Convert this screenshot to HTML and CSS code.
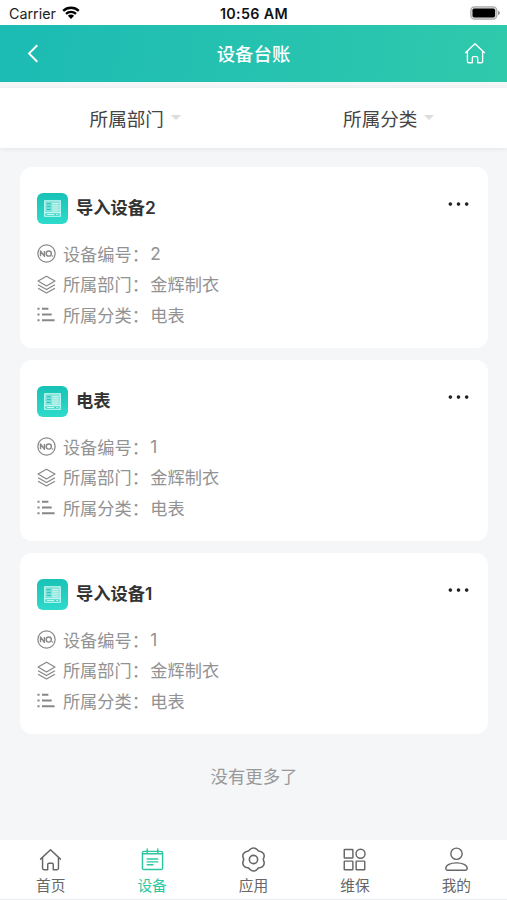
FILE: index.html
```html
<!DOCTYPE html>
<html lang="zh-CN">
<head>
<meta charset="UTF-8">
<title>设备台账</title>
<link rel="stylesheet" href="styles.css">
</head>
<body>
<svg class="defs" width="0" height="0">
  <symbol id="home" viewBox="0 0 24 24"><path d="M1.600 11.600 12 1.800l10.400 9.800M3.700 9.800v11.400q0 1.500 1.500 1.500h3.900v-5.400q0-1.300 1.300-1.300h3.200q1.300 0 1.300 1.300v5.400h3.900q1.500 0 1.500-1.500V9.800"/></symbol>
  <symbol id="no" viewBox="0 0 20 20"><circle cx="10" cy="10" r="9.100"/><path stroke-width="1.500" d="M3.700 13V7.300L7.800 13V7.300"/><circle cx="12.400" cy="10.100" r="2.700" stroke-width="1.500"/><path stroke-width="1.500" d="M16.300 12v1.300"/></symbol>
  <symbol id="layers" viewBox="0 0 20 20"><path d="m10 1.300 8.900 5-8.900 5.200-8.900-5.200zM1.100 10.200l8.900 5.100 8.900-5.100M1.100 13.900l8.900 5.100 8.900-5.100"/></symbol>
  <symbol id="list" viewBox="0 0 20 20"><path stroke-width="2" d="M.5 4h2.200M5.200 4H12M.5 10h2.200M5.200 10h10.300M.5 16h2.200M5.200 16h13.300"/></symbol>
  <symbol id="machine" viewBox="0 0 18 18"><path fill="#fff" fill-opacity=".4" d="M1 1h16v13H1z"/><path fill="none" stroke="#d8fbf5" stroke-width="1.200" d="M.8.8h16.400v16.400H.8zM.8 13.500h16.400"/><path stroke="#16c5b5" stroke-width="1" d="M3 4h4M3 7h4M3 10h4"/><path stroke="#d8fbf5" stroke-width="1" d="M8.500 3.500h7M8.500 5.500h7M8.500 7.500h7M8.500 9.500h7M8.500 11.500h7M3 15.400h8M13 15.400h2"/></symbol>
  <symbol id="dots" viewBox="0 0 20 4"><circle cx="2.200" cy="2" r="1.750"/><circle cx="10" cy="2" r="1.750"/><circle cx="17.800" cy="2" r="1.750"/></symbol>
</svg>

<div class="status">
  <div class="carrier">Carrier
    <svg class="wifi" viewBox="0 0 18 13"><path d="M1.200 4.900a11.200 11.200 0 0 1 15.600 0M4 7.800a7.200 7.200 0 0 1 10 0" fill="none" stroke="#000" stroke-width="2.300"/><path d="M5.900 9.800a4.400 4.400 0 0 1 6.200 0L9 13z"/></svg>
  </div>
  <div class="time">10:56 AM</div>
  <svg class="battery" viewBox="0 0 30 14"><rect x=".8" y=".8" width="26" height="12.400" rx="3.600" fill="#ddd" stroke="#aaa" stroke-width="1.200"/><rect x="2.500" y="2.500" width="22.600" height="9" rx="1.800"/><path d="M28 4.800q2 .6 2 2.200t-2 2.200z" fill="#999"/></svg>
</div>

<header class="header">
  <svg class="back" viewBox="0 0 12 20"><path d="M10.500 1.300 1.800 10l8.700 8.700"/></svg>
  <h1>设备台账</h1>
  <svg class="home"><use href="#home"/></svg>
</header>

<div class="filters">
  <div class="filter">所属部门<i></i></div>
  <div class="filter">所属分类<i></i></div>
</div>

<main class="list">
  <section class="card">
    <div class="card-head"><span class="badge"><svg><use href="#machine"/></svg></span><h2>导入设备2</h2><svg class="more"><use href="#dots"/></svg></div>
    <div class="row"><svg><use href="#no"/></svg><span>设备编号：</span><b>2</b></div>
    <div class="row"><svg><use href="#layers"/></svg><span>所属部门：</span><b>金辉制衣</b></div>
    <div class="row"><svg><use href="#list"/></svg><span>所属分类：</span><b>电表</b></div>
  </section>
  <section class="card">
    <div class="card-head"><span class="badge"><svg><use href="#machine"/></svg></span><h2>电表</h2><svg class="more"><use href="#dots"/></svg></div>
    <div class="row"><svg><use href="#no"/></svg><span>设备编号：</span><b>1</b></div>
    <div class="row"><svg><use href="#layers"/></svg><span>所属部门：</span><b>金辉制衣</b></div>
    <div class="row"><svg><use href="#list"/></svg><span>所属分类：</span><b>电表</b></div>
  </section>
  <section class="card">
    <div class="card-head"><span class="badge"><svg><use href="#machine"/></svg></span><h2>导入设备1</h2><svg class="more"><use href="#dots"/></svg></div>
    <div class="row"><svg><use href="#no"/></svg><span>设备编号：</span><b>1</b></div>
    <div class="row"><svg><use href="#layers"/></svg><span>所属部门：</span><b>金辉制衣</b></div>
    <div class="row"><svg><use href="#list"/></svg><span>所属分类：</span><b>电表</b></div>
  </section>
  <p class="end">没有更多了</p>
</main>

<nav class="tabs">
  <div class="tab"><svg><use href="#home"/></svg>首页</div>
  <div class="tab active"><svg viewBox="0 0 24 24"><rect x="1.500" y="3.500" width="21" height="19" rx="1.500"/><path d="M6.500 1v5M17.500 1v5M1.500 6h21M6.500 11.500h11M6.500 14.500h11M6.500 17.500h6"/></svg>设备</div>
  <div class="tab"><svg class="gear" viewBox="0 0 24 24"><path d="M8.650 2.260A4.600 4.600 0 0 1 15.350 2.260Q16.450 4.290 18.760 4.230A4.600 4.600 0 0 1 22.110 10.030Q20.900 12 22.110 13.970A4.600 4.600 0 0 1 18.760 19.770Q16.450 19.710 15.350 21.740A4.600 4.600 0 0 1 8.650 21.740Q7.550 19.710 5.240 19.770A4.600 4.600 0 0 1 1.890 13.970Q3.100 12 1.890 10.030A4.600 4.600 0 0 1 5.240 4.230Q7.550 4.290 8.650 2.260z"/><circle cx="12" cy="12" r="4"/></svg>应用</div>
  <div class="tab"><svg viewBox="0 0 24 24"><rect x="1.300" y="1.500" width="9" height="9" rx=".6"/><circle cx="18.300" cy="6" r="4.700"/><rect x="1.300" y="13.700" width="9" height="9" rx=".6"/><rect x="13.700" y="13.700" width="9" height="9" rx=".6"/></svg>维保</div>
  <div class="tab"><svg viewBox="0 0 24 24"><circle cx="12" cy="6" r="5.900"/><path d="M2.700 23.200q-1.900 0-1.900-1.700c0-3.800 4.900-6 11.200-6s11.200 2.200 11.200 6q0 1.700-1.900 1.700z"/></svg>我的</div>
</nav>
</body>
</html>
```
FILE: styles.css
```css
* { box-sizing: border-box; }
body {
  margin: 0;
  height: 900px;
  display: flex;
  flex-direction: column;
  background: #f4f6f8;
  font-family: Inter, "Noto Sans CJK SC", sans-serif;
  overflow: hidden;
}
.defs { position: absolute; }
h1, h2, p { margin: 0; }
svg { display: block; flex: none; overflow: visible; }

.status {
  height: 25.4px;
  flex: none;
  display: grid;
  grid-template-columns: 1fr auto 1fr;
  align-items: center;
  padding: 2px 7px 0 9px;
  background: #fff;
  color: #111;
  font-size: 14.3px;
}
.carrier { display: flex; align-items: center; gap: 6px; color: #222; }
.wifi { width: 18px; height: 13px; margin-top: -2px; }
.time { font-weight: 600; margin-left: -1px; letter-spacing: .35px; }
.battery { width: 30px; height: 14px; justify-self: end; margin-top: -2px; }

.header {
  height: 56.200px;
  flex: none;
  display: flex;
  align-items: center;
  justify-content: space-between;
  padding: 0 21px 0 27px;
  background: linear-gradient(100deg, #1cbbb4, #2fc9ac);
  color: #fff;
}
.header svg { fill: none; stroke: #fff; stroke-width: 2; }
.back { width: 12px; height: 19px; }
.header .home { width: 22px; height: 22px; margin-top: -1px; stroke-width: 1.5; stroke-linejoin: round; stroke-linecap: round; }
h1 { font-size: 18.400px; font-weight: 500; line-height: 28px; margin: 1px 0 0 4px; }

.filters {
  height: 60px;
  flex: none;
  display: flex;
  margin-top: 6.100px;
  padding-bottom: 1px;
  background: #fff;
  box-shadow: 0 1px 5px rgba(0, 0, 0, .07);
}
.filter {
  flex: 1;
  display: flex;
  align-items: center;
  justify-content: center;
  gap: 7px;
  padding-left: 17px;
  color: #444;
  font-size: 18.600px;
}
.filter i { margin-top: 1px; border: 5px solid transparent; border-top-color: #dcdcdc; border-bottom: 0; }

.list { flex: 1; padding: 19.200px 19px 0 20px; }
.card {
  height: 181px;
  margin-bottom: 12px;
  padding: 26px 19px 0 17.400px;
  border-radius: 12px;
  background: #fff;
}
.card-head { display: flex; align-items: center; height: 31px; margin-bottom: 14px; }
.badge {
  width: 31px;
  height: 31px;
  display: grid;
  place-items: center;
  border-radius: 6px;
  background: linear-gradient(#18c2b6, #2edbcb);
}
.badge svg { width: 17px; height: 17px; }
h2 { flex: 1; margin-left: 7.500px; color: #333; font-size: 17.300px; font-weight: 600; line-height: 26px; }
.more { width: 21px; height: 4.200px; margin-top: -8px; fill: #222; }
.row { display: flex; align-items: center; height: 30.500px; color: #929292; font-size: 17.200px; }
.row svg { width: 19px; height: 19px; margin: 1px 7px 0 -.500px; fill: none; stroke: #888; stroke-width: 1.300; stroke-linejoin: round; }
.row b { margin-left: 1.500px; font-weight: 400; }
.end { margin-top: 30px; text-align: center; color: #999; font-size: 17.400px; line-height: 26px; }

.tabs {
  height: 60px;
  flex: none;
  display: flex;
  background: #fff;
  border-bottom: 1px solid #eceef0;
}
.tab {
  flex: 1;
  display: flex;
  flex-direction: column;
  align-items: center;
  padding-top: 8px;
  color: #666;
  font-size: 14.700px;
  line-height: 22px;
}
.tab svg { width: 23px; height: 23px; margin-bottom: 3.500px; fill: none; stroke: currentColor; stroke-width: 1.500; stroke-linejoin: round; stroke-linecap: round; }
.tab .gear { transform: scale(1.080); }
.active { color: #2bc8a2; }
```
